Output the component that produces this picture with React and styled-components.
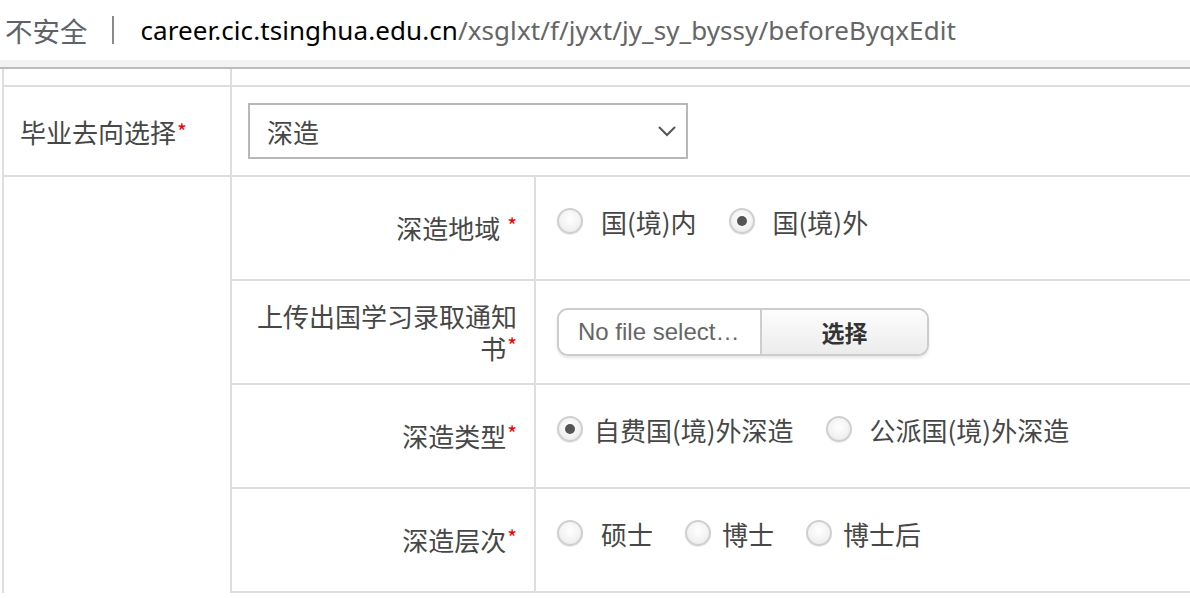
import React from 'react'
import styled, { createGlobalStyle } from 'styled-components'

const GlobalStyle = createGlobalStyle`
  body {
    margin: 0;
    background: #fff;
    font-family: "Noto Sans CJK SC", "Noto Sans", sans-serif;
    overflow: hidden;
  }
`

const AddressBar = styled.div`
  height: 60px;
  display: flex;
  align-items: center;
  padding-left: 5px;
  font-size: 26px;
  white-space: nowrap;
`

const Insecure = styled.span`
  color: #5f6368;
  font-size: 27.5px;
`

const Divider = styled.span`
  width: 2px;
  height: 28px;
  background: #8a8a8a;
  margin: 0 27px 0 24px;
`

const Url = styled.span`
  font-family: "Noto Sans", "Open Sans", sans-serif;
  color: #000;
  letter-spacing: 0.08px;
`

const UrlPath = styled.span`
  color: #666;
`

const Band = styled.div`
  height: 7px;
  background: #f2f2f2;
  border-bottom: 2px solid #bcbcbc;
`

const Sheet = styled.div`
  margin-left: 2px;
  border-left: 2px solid #dedede;
  display: grid;
  grid-template-columns: 228px 1fr;
  color: #474747;
  font-size: 26px;
`

const Cell = styled.div`
  border-bottom: 2px solid #dedede;
  border-right: ${p => (p.$divider ? '2px solid #dedede' : 'none')};
  height: ${p => p.$h}px;
  display: flex;
  align-items: center;
  padding-left: ${p => p.$pl || 0}px;
  box-sizing: content-box;
`

const SpanCell = styled.div`
  border-right: 2px solid #dedede;
`

const Nested = styled.div`
  display: grid;
  grid-template-columns: 304px 1fr;
`

const Label = styled.div`
  height: 104px;
  border-bottom: 2px solid #dedede;
  border-right: 2px solid #dedede;
  display: flex;
  align-items: center;
  justify-content: flex-end;
  text-align: right;
  padding: 0 17px 0 22px;
  line-height: 32px;
  box-sizing: border-box;
`

const Value = styled.div`
  height: 104px;
  border-bottom: 2px solid #dedede;
  display: flex;
  align-items: flex-start;
  padding: ${p => p.$pt}px 0 0 21px;
  box-sizing: border-box;
`

const Star = styled.span`
  display: inline-block;
  margin-left: 1px;
  color: #e00;
  font-size: 21px;
  vertical-align: top;
  line-height: 26px;
`

const Select = styled.div`
  width: 410px;
  height: 52px;
  border: 2px solid #b8b8b8;
  margin-left: 16px;
  display: flex;
  align-items: center;
  justify-content: space-between;
  padding: 0 9px 0 17px;
  box-sizing: content-box;
  color: #474747;
`

const Option = styled.label`
  display: flex;
  align-items: center;
  margin-right: 32px;
  height: 28px;
`

const Circle = styled.span`
  width: 22px;
  height: 22px;
  border-radius: 50%;
  border: 2px solid #cfcfcf;
  background: radial-gradient(circle at 50% 40%, #fff 0%, #f3f3f3 55%, #e4e4e4 100%);
  box-shadow: 0 1px 1px rgba(0, 0, 0, 0.08);
  display: flex;
  align-items: center;
  justify-content: center;
  flex-shrink: 0;

  &::after {
    content: '';
    width: 10px;
    height: 10px;
    border-radius: 50%;
    background: #555;
    display: ${p => (p.$on ? 'block' : 'none')};
  }
`

const OptionText = styled.span`
  margin-left: ${p => (p.$wide ? 18 : 11)}px;
  color: #474747;
`

const FilePicker = styled.div`
  display: flex;
  width: 368px;
  height: 44px;
  border: 2px solid #cdcdcd;
  border-radius: 11px;
  overflow: hidden;
  box-shadow: 0 2px 3px rgba(0, 0, 0, 0.1);
`

const FileName = styled.div`
  width: 182px;
  padding-left: 19px;
  display: flex;
  align-items: center;
  font-family: "Liberation Sans", Arial, sans-serif;
  font-size: 24px;
  color: #666;
  background: #fff;
  border-right: 2px solid #cdcdcd;
  white-space: nowrap;
  overflow: hidden;
`

const FileButton = styled.div`
  flex: 1;
  display: flex;
  align-items: center;
  justify-content: center;
  font-size: 23px;
  font-weight: 700;
  color: #333;
  background: linear-gradient(#fdfdfd, #ececec);
`

const Radio = ({ on, wide, children }) => (
  <Option>
    <Circle $on={on} />
    <OptionText $wide={wide}>{children}</OptionText>
  </Option>
)

export default function App() {
  return (
    <>
      <GlobalStyle />
      <AddressBar>
        <Insecure>不安全</Insecure>
        <Divider />
        <Url>
          career.cic.tsinghua.edu.cn<UrlPath>/xsglxt/f/jyxt/jy_sy_byssy/beforeByqxEdit</UrlPath>
        </Url>
      </AddressBar>
      <Band />
      <Sheet>
        <Cell $divider $h={16} />
        <Cell $h={16} />
        <Cell $divider $h={88} $pl={16}>
          毕业去向选择<Star>*</Star>
        </Cell>
        <Cell $h={88}>
          <Select>
            <span>深造</span>
            <svg width="20" height="12" viewBox="0 0 20 12">
              <path d="M2 2 L10 10 L18 2" fill="none" stroke="#555" strokeWidth="2" />
            </svg>
          </Select>
        </Cell>
        <SpanCell />
        <Nested>
          <Label>
            <span>深造地域 <Star>*</Star></span>
          </Label>
          <Value $pt={30}>
            <Radio wide>国(境)内</Radio>
            <Radio on wide>国(境)外</Radio>
          </Value>
          <Label>
            <span>上传出国学习录取通知书<Star>*</Star></span>
          </Label>
          <Value $pt={27}>
            <FilePicker>
              <FileName>No file select…</FileName>
              <FileButton>选择</FileButton>
            </FilePicker>
          </Value>
          <Label>
            <span>深造类型<Star>*</Star></span>
          </Label>
          <Value $pt={30}>
            <Radio on>自费国(境)外深造</Radio>
            <Radio wide>公派国(境)外深造</Radio>
          </Value>
          <Label>
            <span>深造层次<Star>*</Star></span>
          </Label>
          <Value $pt={30}>
            <Radio wide>硕士</Radio>
            <Radio>博士</Radio>
            <Radio>博士后</Radio>
          </Value>
        </Nested>
      </Sheet>
    </>
  )
}
